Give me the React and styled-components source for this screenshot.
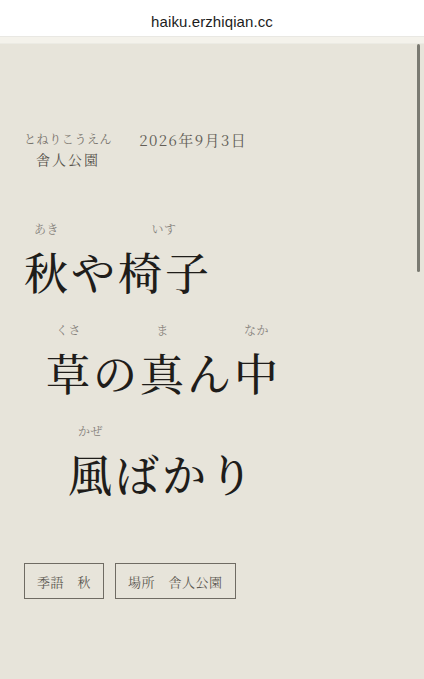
import React from "react";
import styled, { createGlobalStyle } from "styled-components";

const Global = createGlobalStyle`
  html, body { margin: 0; padding: 0; }
  body {
    background: #e7e4da;
    font-family: "Noto Serif CJK JP", "Noto Serif JP", "IPAMincho", "IPAexMincho", "Noto Sans CJK JP", serif;
    -webkit-font-smoothing: antialiased;
  }
`;

const Page = styled.div`
  position: relative;
  width: 424px;
  height: 679px;
  overflow: hidden;
  display: flex;
  flex-direction: column;
  background: #e7e4da;
`;

const UrlBar = styled.div`
  height: 36px;
  flex: none;
  background: #ffffff;
  display: flex;
  align-items: center;
  justify-content: center;
  padding-top: 6px;
  box-sizing: border-box;
  font-family: "Liberation Sans", "Inter", sans-serif;
  font-size: 15px;
  color: #1c1c1c;
  letter-spacing: 0.1px;
`;

const Strip = styled.div`
  height: 7px;
  flex: none;
  background: #f4f2eb;
  border-top: 1px solid #e9e8e3;
  box-shadow: inset 0 -1px 0 #ecebe4;
`;

const Main = styled.main`
  flex: 1;
  padding: 88px 0 0 24px;
  color: #24221e;
`;

const Header = styled.header`
  display: flex;
  align-items: flex-start;
  gap: 27px;
`;

const Place = styled.div`
  display: flex;
  flex-direction: column;
  align-items: center;
  gap: 5px;
`;

const PlaceReading = styled.span`
  font-size: 12px;
  line-height: 14px;
  letter-spacing: 0.6px;
  color: #77736b;
`;

const PlaceName = styled.span`
  font-size: 14px;
  line-height: 16px;
  letter-spacing: 2px;
  color: #57534c;
`;

const DateText = styled.span`
  font-size: 15px;
  line-height: 18px;
  letter-spacing: 1.4px;
  color: #625e57;
  margin-top: -1px;
`;

const Poem = styled.section`
  margin-top: 55px;
  display: flex;
  flex-direction: column;
  gap: 27px;
`;

const Line = styled.div`
  display: flex;
  align-items: flex-end;
  padding-left: ${(p) => p.$indent}px;
`;

const Segment = styled.span`
  display: inline-flex;
  flex-direction: column;
  align-items: center;
`;

const Reading = styled.span`
  height: 14px;
  font-size: 12px;
  line-height: 14px;
  letter-spacing: 0.5px;
  color: #85817a;
  margin-bottom: 10px;
  margin-right: 2px;
`;

const Base = styled.span`
  font-size: 44px;
  line-height: 50px;
  letter-spacing: 3px;
  color: #1f1d1a;
  font-weight: 500;
`;

const Tags = styled.div`
  margin-top: 65px;
  display: flex;
  gap: 11px;
`;

const Tag = styled.div`
  height: 36px;
  box-sizing: border-box;
  padding: 0 12px;
  border: 1.5px solid #6f6b63;
  display: flex;
  align-items: center;
  font-size: 13px;
  letter-spacing: 0.5px;
  color: #5c5851;
  white-space: pre;
`;

const Scrollbar = styled.div`
  position: absolute;
  right: 4px;
  top: 44px;
  width: 3px;
  height: 228px;
  border-radius: 2px;
  background: #7b7a72;
`;

const poem = [
  { indent: 0, segs: [["秋", "あき"], ["や"], ["椅子", "いす"]] },
  { indent: 22, segs: [["草", "くさ"], ["の"], ["真", "ま"], ["ん"], ["中", "なか"]] },
  { indent: 44, segs: [["風", "かぜ"], ["ばかり"]] },
];

export default function App() {
  return (
    <>
      <Global />
      <Page>
        <UrlBar>haiku.erzhiqian.cc</UrlBar>
        <Strip />
        <Main>
          <Header>
            <Place>
              <PlaceReading>とねりこうえん</PlaceReading>
              <PlaceName>舎人公園</PlaceName>
            </Place>
            <DateText>2026年9月3日</DateText>
          </Header>
          <Poem>
            {poem.map((line, i) => (
              <Line key={i} $indent={line.indent}>
                {line.segs.map(([base, reading], j) => (
                  <Segment key={j}>
                    <Reading>{reading || ""}</Reading>
                    <Base>{base}</Base>
                  </Segment>
                ))}
              </Line>
            ))}
          </Poem>
          <Tags>
            <Tag>季語　秋</Tag>
            <Tag>場所　舎人公園</Tag>
          </Tags>
        </Main>
        <Scrollbar />
      </Page>
    </>
  );
}
